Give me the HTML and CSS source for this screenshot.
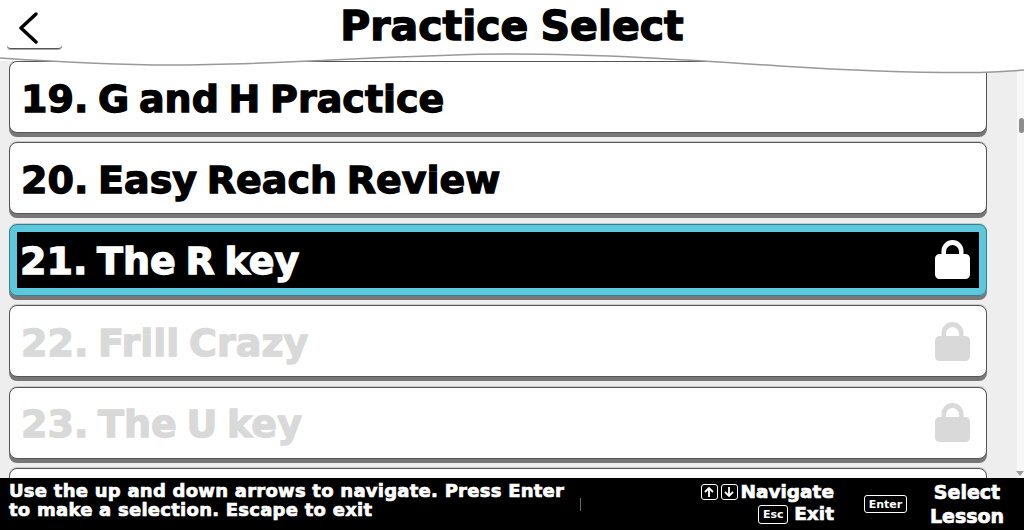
FILE: index.html
```html
<!DOCTYPE html>
<html lang="en">
<head>
    <meta charset="UTF-8">
    <title>Practice Select</title>
    <link rel="stylesheet" href="styles.css">
</head>
<body>
    <div class="screen">
        <header class="top-bar">
            <button class="back-btn" aria-label="Back">
                <svg width="20" height="32" viewBox="0 0 20 32"><path d="M18 2 L3 16 L18 30" fill="none" stroke="#000" stroke-width="3.4" stroke-linecap="round" stroke-linejoin="round"/></svg>
            </button>
            <h1>Practice Select</h1>
            <svg class="wave" width="1024" height="30" viewBox="0 0 1024 30" preserveAspectRatio="none">
                <path d="M0 8 C60 12 110 15 170 15 C290 15 400 4 512 4 C600 4 690 10 780 16 C860 21 930 23 980 22.5 C1000 22 1012 21 1024 20 L1024 0 L0 0 Z" fill="#fff"/>
                <path d="M0 8 C60 12 110 15 170 15 C290 15 400 4 512 4 C600 4 690 10 780 16 C860 21 930 23 980 22.5 C1000 22 1012 21 1024 20" fill="none" stroke="#999" stroke-width="1.5"/>
            </svg>
        </header>

        <main class="practice-list">
            <div class="lessons">
                <div class="lesson"><span>19. G and H Practice</span></div>
                <div class="lesson"><span>20. Easy Reach Review</span></div>
                <div class="lesson selected">
                    <span>21. The R key</span>
                    <svg class="lock" width="35" height="39" viewBox="0 0 35 39"><path d="M6.5 14 V11 A11 11 0 0 1 28.5 11 V14 H30.5 A4.5 4.5 0 0 1 35 18.5 V34.5 A4.5 4.5 0 0 1 30.5 39 H4.5 A4.5 4.5 0 0 1 0 34.5 V18.5 A4.5 4.5 0 0 1 4.5 14 Z M11 14 H24 V11.500 A6.500 6.500 0 0 0 11 11.500 Z" fill="currentColor" fill-rule="evenodd"/></svg>
                </div>
                <div class="lesson locked">
                    <span>22. Frill Crazy</span>
                    <svg class="lock" width="35" height="39" viewBox="0 0 35 39"><path d="M6.5 14 V11 A11 11 0 0 1 28.5 11 V14 H30.5 A4.5 4.5 0 0 1 35 18.5 V34.5 A4.5 4.5 0 0 1 30.5 39 H4.5 A4.5 4.5 0 0 1 0 34.5 V18.5 A4.5 4.5 0 0 1 4.5 14 Z M11 14 H24 V11.500 A6.500 6.500 0 0 0 11 11.500 Z" fill="currentColor" fill-rule="evenodd"/></svg>
                </div>
                <div class="lesson locked">
                    <span>23. The U key</span>
                    <svg class="lock" width="35" height="39" viewBox="0 0 35 39"><path d="M6.5 14 V11 A11 11 0 0 1 28.5 11 V14 H30.5 A4.5 4.5 0 0 1 35 18.5 V34.5 A4.5 4.5 0 0 1 30.5 39 H4.5 A4.5 4.5 0 0 1 0 34.5 V18.5 A4.5 4.5 0 0 1 4.5 14 Z M11 14 H24 V11.500 A6.500 6.500 0 0 0 11 11.500 Z" fill="currentColor" fill-rule="evenodd"/></svg>
                </div>
                <div class="lesson"></div>
            </div>
            <div class="scrollbar">
                <div class="scroll-thumb"></div>
                <svg class="scroll-down" width="8" height="5" viewBox="0 0 8 5"><path d="M0 0 H8 L4 5 Z" fill="#999"/></svg>
            </div>
        </main>

        <footer class="help-bar">
            <div class="help-text">Use the up and down arrows to navigate. Press Enter<br>to make a selection. Escape to exit</div>
            <div class="divider"></div>
            <div class="hints">
                <div class="hint">
                    <span class="key arrow"><svg width="12" height="12" viewBox="0 0 12 12"><path d="M6 11 V2 M2 6 L6 2 L10 6" fill="none" stroke="#fff" stroke-width="1.8"/></svg></span>
                    <span class="key arrow"><svg width="12" height="12" viewBox="0 0 12 12"><path d="M6 1 V10 M2 6 L6 10 L10 6" fill="none" stroke="#fff" stroke-width="1.8"/></svg></span>
                    <span class="hint-label">Navigate</span>
                </div>
                <div class="hint">
                    <span class="key esc">Esc</span>
                    <span class="hint-label">Exit</span>
                </div>
            </div>
            <span class="key enter">Enter</span>
            <div class="select-label">Select<br>Lesson</div>
        </footer>
    </div>
</body>
</html>
```

FILE: styles.css
```css
* {
    box-sizing: border-box;
}

body {
    margin: 0;
    font-family: 'DejaVu Sans', 'Liberation Sans', sans-serif;
    font-weight: 700;
    background: #fff;
    color: #000;
    -webkit-text-stroke: 0.7px currentColor;
}

.screen {
    width: 1024px;
    height: 530px;
    display: flex;
    flex-direction: column;
    overflow: hidden;
}

/* header */
.top-bar {
    position: relative;
    z-index: 2;
    height: 61px;
    flex-shrink: 0;
    background: #fff;
    display: flex;
    justify-content: center;
}

.back-btn {
    position: absolute;
    left: 7px;
    top: 8px;
    width: 55px;
    height: 41px;
    padding: 0 0 0 11px;
    background: none;
    border: none;
    border-bottom: 1px solid #555;
    border-radius: 0 0 4px 4px;
    box-shadow: 0 1px 0 #aaa;
    display: flex;
    align-items: center;
    justify-content: flex-start;
}

h1 {
    margin: 0;
    font-size: 41px;
    font-weight: 700;
    line-height: 52px;
    word-spacing: -2px;
    -webkit-text-stroke: 1.4px currentColor;
}

.wave {
    position: absolute;
    left: 0;
    top: 50px;
    display: block;
}

/* list */
.practice-list {
    flex: 1;
    min-height: 0;
    display: flex;
    background: #eeeeee;
    overflow: hidden;
}

.lessons {
    flex: 1;
    padding: 0 30px 0 9px;
    display: flex;
    flex-direction: column;
    gap: 9.4px;
}

.lesson {
    height: 72px;
    flex-shrink: 0;
    padding: 0 16px 0 11px;
    background: #fff;
    border: 1px solid #555;
    border-radius: 8px;
    box-shadow: 0 4px 0 #777, 0 -1px 0 #ccc;
    display: flex;
    align-items: center;
    justify-content: space-between;
    font-size: 38px;
    word-spacing: -3.5px;
    -webkit-text-stroke: 1.3px currentColor;
}

.lesson span {
    padding-top: 3px;
}

.lesson.selected {
    padding: 0 9px 0 3px;
    background: #000;
    color: #fff;
    border: 8px solid #5bc8dc;
    outline: 1px solid #3a7f8c;
    outline-offset: -1px;
}

.lesson.locked {
    color: #d9d9d9;
}

.scrollbar {
    position: relative;
    width: 7px;
    flex-shrink: 0;
    background: #f7f7f7;
}

.scroll-thumb {
    position: absolute;
    left: 2px;
    top: 57px;
    width: 5px;
    height: 15px;
    background: #8c8c8c;
    border-radius: 3px;
}

.scroll-down {
    position: absolute;
    left: -1px;
    bottom: 2px;
}

/* footer */
.help-bar {
    height: 52px;
    flex-shrink: 0;
    padding-left: 9px;
    background: #000;
    color: #fff;
    display: flex;
    align-items: flex-start;
}

.help-text {
    width: 571px;
    padding-top: 4px;
    font-size: 18px;
    line-height: 18.5px;
    letter-spacing: 0.25px;
    white-space: nowrap;
}

.divider {
    width: 1px;
    height: 13px;
    margin-top: 20px;
    background: #666;
}

.hints {
    width: 253px;
    padding-top: 3px;
    display: flex;
    flex-direction: column;
    align-items: flex-end;
}

.hint {
    height: 22px;
    display: flex;
    align-items: center;
    gap: 3px;
}

.hint-label {
    font-size: 18.5px;
    line-height: 22px;
}

.key {
    border: 1.5px solid #fff;
    border-radius: 3px;
    display: flex;
    align-items: center;
    justify-content: center;
    font-size: 11px;
    -webkit-text-stroke: 0;
}

.key.arrow {
    width: 17px;
    height: 16px;
}

.key.esc {
    width: 30px;
    height: 19px;
    margin-right: 3px;
}

.key.enter {
    width: 43px;
    height: 18px;
    margin: 17px 0 0 30px;
}

.select-label {
    width: 96px;
    margin-left: 12px;
    text-align: center;
    font-size: 19px;
    line-height: 24px;
    padding-top: 2px;
}
```
